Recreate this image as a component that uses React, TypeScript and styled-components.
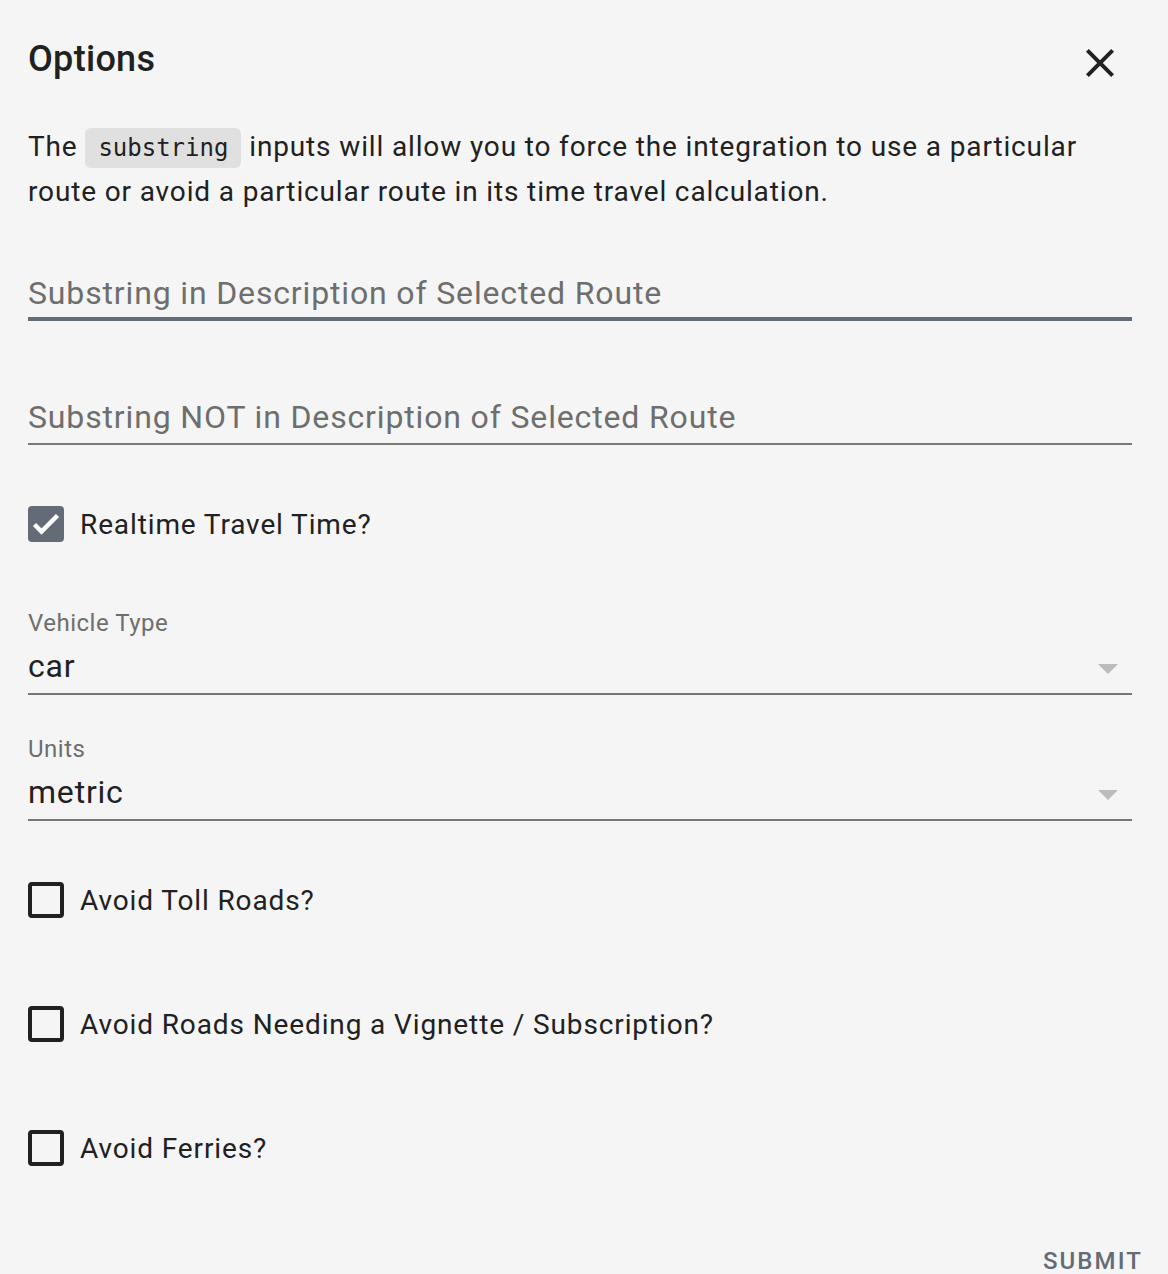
import React from "react";
import styled, { createGlobalStyle } from "styled-components";

const Global = createGlobalStyle`
  html, body { margin: 0; padding: 0; background: #f5f5f5; }
  body { font-family: Roboto, "Noto Sans", Arial, sans-serif; color: #212121; }
  * { box-sizing: border-box; }
`;

const Page = styled.div`
  width: 1168px;
  min-height: 1274px;
  background: #f5f5f5;
  overflow: hidden;
`;

const Content = styled.div`
  padding: 0 36px 0 28px;
`;

const Header = styled.div`
  display: flex;
  justify-content: space-between;
  align-items: flex-start;
`;

const Title = styled.h2`
  margin: 35px 0 0;
  font-size: 36px;
  line-height: 48px;
  font-weight: 500;
  letter-spacing: 0.3px;
  color: #212121;
`;

const CloseButton = styled.button`
  margin: 39px 8px 0 0;
  width: 48px;
  height: 48px;
  padding: 0;
  border: none;
  background: transparent;
  color: #212121;
  display: flex;
  align-items: center;
  justify-content: center;
  cursor: pointer;
`;

const Intro = styled.p`
  margin: 38px 0 0;
  font-size: 28px;
  line-height: 44px;
  letter-spacing: 0.86px;
  color: #212121;
`;

const Code = styled.code`
  font-family: "DejaVu Sans Mono", "Liberation Mono", monospace;
  font-size: 24px;
  letter-spacing: 0;
  background: #e0e0e0;
  border-radius: 6px;
  padding: 6px 13px;
`;

const Field = styled.label<{ $focused?: boolean; $mt: number }>`
  display: block;
  margin-top: ${(p) => p.$mt}px;
  padding-top: 22px;
  height: 72px;
  border-bottom: ${(p) => (p.$focused ? "4px solid #646c77" : "2px solid #7a7a7a")};
`;

const Input = styled.input`
  display: block;
  width: 100%;
  height: 44px;
  border: none;
  outline: none;
  padding: 0;
  background: transparent;
  font-family: Roboto, Arial, sans-serif;
  font-size: 32px;
  letter-spacing: 0.85px;
  color: #212121;
  &::placeholder {
    color: #6e6e6e;
    opacity: 1;
  }
`;

const CheckRow = styled.label`
  display: flex;
  align-items: center;
  gap: 16px;
  margin-top: 34px;
  height: 90px;
  font-size: 28px;
  letter-spacing: 0.88px;
  color: #212121;
  cursor: pointer;
`;

const Box = styled.span<{ $checked?: boolean }>`
  width: 36px;
  height: 36px;
  flex: none;
  border-radius: 4px;
  display: flex;
  align-items: center;
  justify-content: center;
  background: ${(p) => (p.$checked ? "#636b76" : "transparent")};
  border: ${(p) => (p.$checked ? "none" : "4px solid #212121")};
`;

const Select = styled.div`
  margin-top: 39px;
  border-bottom: 2px solid #767676;
`;

const SelectLabel = styled.div`
  font-size: 24px;
  line-height: 30px;
  letter-spacing: 0.5px;
  margin-bottom: 6px;
  color: #6e6e6e;
`;

const SelectValue = styled.div`
  display: flex;
  align-items: center;
  justify-content: space-between;
  height: 44px;
  margin-bottom: 5px;
  font-size: 32px;
  letter-spacing: 0.8px;
  color: #212121;
`;

const Arrow = styled.span`
  width: 0;
  height: 0;
  margin: 6px 14px 0 0;
  border-left: 10px solid transparent;
  border-right: 10px solid transparent;
  border-top: 10px solid #bcbcbc;
`;

const Footer = styled.div`
  display: flex;
  justify-content: flex-end;
  padding-right: 9px;
  margin-top: 32px;
`;

const TextButton = styled.button`
  height: 72px;
  padding: 0 16px;
  border: none;
  background: transparent;
  font-family: Roboto, Arial, sans-serif;
  font-size: 24px;
  font-weight: 500;
  letter-spacing: 2.1px;
  text-transform: uppercase;
  color: #636b76;
  cursor: pointer;
`;

const CloseIcon = () => (
  <svg width="48" height="48" viewBox="0 0 24 24" fill="currentColor">
    <path d="M19,6.41L17.59,5L12,10.59L6.41,5L5,6.41L10.59,12L5,17.59L6.41,19L12,13.41L17.59,19L19,17.59L13.41,12L19,6.41Z" />
  </svg>
);

const Check = () => (
  <svg width="36" height="36" viewBox="0 0 36 36" fill="none">
    <path d="M6.5 18.5 L13.5 25.5 L29.5 9.5" stroke="#fff" strokeWidth="4.5" />
  </svg>
);

function CheckOption({ label, checked }: { label: string; checked?: boolean }) {
  return (
    <CheckRow>
      <Box $checked={checked}>{checked && <Check />}</Box>
      {label}
    </CheckRow>
  );
}

function SelectField({ label, value }: { label: string; value: string }) {
  return (
    <Select>
      <SelectLabel>{label}</SelectLabel>
      <SelectValue>
        {value}
        <Arrow />
      </SelectValue>
    </Select>
  );
}

export default function App() {
  return (
    <Page>
      <Global />
      <Content>
        <Header>
          <Title>Options</Title>
          <CloseButton aria-label="Close">
            <CloseIcon />
          </CloseButton>
        </Header>
        <Intro>
          The <Code>substring</Code> inputs will allow you to force the integration to use a
          particular route or avoid a particular route in its time travel calculation.
        </Intro>
        <Field $focused $mt={35}>
          <Input placeholder="Substring in Description of Selected Route" />
        </Field>
        <Field $mt={52}>
          <Input placeholder="Substring NOT in Description of Selected Route" />
        </Field>
        <CheckOption label="Realtime Travel Time?" checked />
        <SelectField label="Vehicle Type" value="car" />
        <SelectField label="Units" value="metric" />
        <CheckOption label="Avoid Toll Roads?" />
        <CheckOption label="Avoid Roads Needing a Vignette / Subscription?" />
        <CheckOption label="Avoid Ferries?" />
      </Content>
      <Footer>
        <TextButton>Submit</TextButton>
      </Footer>
    </Page>
  );
}
